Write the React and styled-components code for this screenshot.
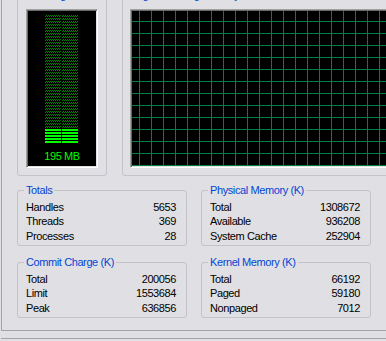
import React from "react";
import styled, { createGlobalStyle } from "styled-components";

const GlobalStyle = createGlobalStyle`
  html, body {
    margin: 0;
    padding: 0;
    background: #e0dfe3;
    overflow: hidden;
  }
  body {
    font-family: "Liberation Sans", Arial, sans-serif;
    font-size: 11px;
    letter-spacing: -0.4px;
    color: #000;
  }
`;

const Window = styled.div`
  width: 386px;
  height: 341px;
  overflow: hidden;
  padding-left: 1px;
  box-sizing: border-box;
  display: flex;
  flex-direction: column;
  background: #e0dfe3;
`;

const Page = styled.div`
  flex-shrink: 0;
  width: 430px;
  height: 331px;
  box-sizing: border-box;
  padding-left: 15px;
  border-left: 1px solid #a3a3a8;
  border-bottom: 1px solid #a3a3a8;
`;

const StatusLine = styled.div`
  flex-shrink: 0;
  margin-top: 7px;
  width: 430px;
  height: 3px;
  border-top: 1px solid #a3a3a8;
`;

const TopRow = styled.div`
  display: flex;
  gap: 15px;
  margin-top: -11px;
`;

const GroupBox = styled.fieldset`
  margin: 0;
  min-width: 0;
  box-sizing: border-box;
  border: 1px solid #c3c3ca;
  border-radius: 3px;
  padding: ${p => p.$pad || "0"};
  width: ${p => p.$width}px;
`;

const Legend = styled.legend`
  color: #0046d5;
  line-height: 13px;
  padding: 0 2px;
  margin-left: -2px;
`;

const Meter = styled.div`
  width: 72px;
  height: 159px;
  box-sizing: border-box;
  background: #000;
  border: 1px solid;
  border-color: #a0a0a0 #fff #fff #a0a0a0;
  box-shadow: inset 1px 1px #696969, inset -1px -1px #e3e3e3;
  padding: 5px 0 0 18px;
  display: flex;
  flex-direction: column;
  align-items: flex-start;
`;

const Bars = styled.div`
  display: grid;
  grid-template-columns: 16px 16px;
  grid-auto-rows: 2px;
  column-gap: 1px;
  row-gap: 1px;
`;

const Cell = styled.div`
  background: ${p =>
    p.$lit
      ? "#00ff00"
      : "repeating-conic-gradient(#008000 0 25%, #000 0 50%) 0 0 / 2px 2px"};
`;

const MeterLabel = styled.div`
  color: #00ff00;
  line-height: 13px;
  margin: 7px 0 0 -18px;
  align-self: center;
`;

const Graph = styled.div`
  height: 159px;
  box-sizing: border-box;
  border: 1px solid;
  border-color: #a0a0a0 #fff #fff #a0a0a0;
  box-shadow: inset 1px 1px #696969, inset -1px -1px #e3e3e3;
  background-color: #000;
  background-image: linear-gradient(to bottom, #008040 1px, transparent 1px),
    linear-gradient(to right, #008040 1px, transparent 1px);
  background-size: 12px 12px;
  background-position: 8px 11px;
`;

const StatsGrid = styled.div`
  display: grid;
  grid-template-columns: 170px 170px;
  column-gap: 14px;
  row-gap: 10px;
  margin-top: 8px;
`;

const Row = styled.div`
  display: flex;
  justify-content: space-between;
  line-height: 14.5px;
`;

const ROWS = 43;
const LIT = 5;

const groups = [
  { title: "Totals", rows: [["Handles", "5653"], ["Threads", "369"], ["Processes", "28"]] },
  { title: "Physical Memory (K)", rows: [["Total", "1308672"], ["Available", "936208"], ["System Cache", "252904"]] },
  { title: "Commit Charge (K)", rows: [["Total", "200056"], ["Limit", "1553684"], ["Peak", "636856"]] },
  { title: "Kernel Memory (K)", rows: [["Total", "66192"], ["Paged", "59180"], ["Nonpaged", "7012"]] },
];

const StatGroup = ({ title, rows }) => (
  <GroupBox $width={170} $pad="2.5px 10px 2px 8px">
    <Legend>{title}</Legend>
    {rows.map(([label, value]) => (
      <Row key={label}>
        <span>{label}</span>
        <span>{value}</span>
      </Row>
    ))}
  </GroupBox>
);

const App = () => {
  return (
    <Window>
      <GlobalStyle />
      <Page>
        <TopRow>
          <GroupBox $width={90} $pad="7px 8px">
            <Legend>PF Usage</Legend>
            <Meter>
              <Bars>
                {Array.from({ length: ROWS * 2 }, (_, i) => (
                  <Cell key={i} $lit={Math.floor(i / 2) >= ROWS - LIT} />
                ))}
              </Bars>
              <MeterLabel>195 MB</MeterLabel>
            </Meter>
          </GroupBox>
          <GroupBox $width={290} $pad="7px 8px 7px 7px">
            <Legend>Page File Usage History</Legend>
            <Graph />
          </GroupBox>
        </TopRow>
        <StatsGrid>
          {groups.map(g => (
            <StatGroup key={g.title} {...g} />
          ))}
        </StatsGrid>
      </Page>
      <StatusLine />
    </Window>
  );
};

export default App;
